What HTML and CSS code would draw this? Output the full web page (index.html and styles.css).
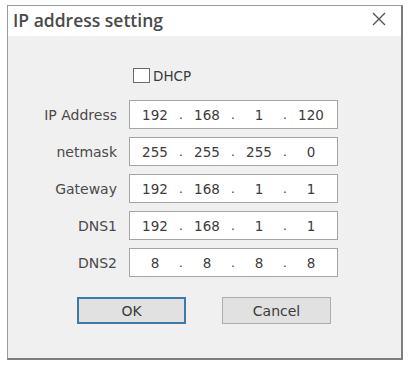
FILE: index.html
```html
<!DOCTYPE html>
<html>
<head>
<meta charset="utf-8">
<link rel="stylesheet" href="styles.css">
</head>
<body>
<div class="window">
  <div class="titlebar">
    <span class="title">IP address setting</span>
    <svg class="close" width="14" height="14" viewBox="0 0 14 14"><path d="M1 1 L13 13 M13 1 L1 13" stroke="#555" stroke-width="1.4" fill="none"/></svg>
  </div>
  <div class="content">
    <label class="dhcp"><span class="checkbox"></span><span class="dhcp-text">DHCP</span></label>
    <div class="fields">
      <div class="label">IP Address</div>
      <div class="ipbox"><span>192</span><span class="dot">.</span><span>168</span><span class="dot">.</span><span>1</span><span class="dot">.</span><span>120</span></div>
      <div class="label">netmask</div>
      <div class="ipbox"><span>255</span><span class="dot">.</span><span>255</span><span class="dot">.</span><span>255</span><span class="dot">.</span><span>0</span></div>
      <div class="label">Gateway</div>
      <div class="ipbox"><span>192</span><span class="dot">.</span><span>168</span><span class="dot">.</span><span>1</span><span class="dot">.</span><span>1</span></div>
      <div class="label">DNS1</div>
      <div class="ipbox"><span>192</span><span class="dot">.</span><span>168</span><span class="dot">.</span><span>1</span><span class="dot">.</span><span>1</span></div>
      <div class="label">DNS2</div>
      <div class="ipbox"><span>8</span><span class="dot">.</span><span>8</span><span class="dot">.</span><span>8</span><span class="dot">.</span><span>8</span></div>
    </div>
    <div class="buttons">
      <button class="btn ok">OK</button>
      <button class="btn cancel">Cancel</button>
    </div>
  </div>
</div>
</body>
</html>
```
FILE: styles.css
```css
html, body {
  margin: 0;
  padding: 0;
  background: #ffffff;
}
body {
  padding: 5px 0 0 7px;
  font-family: "DejaVu Sans", sans-serif;
}
.window {
  width: 393px;
  height: 352px;
  border: 1px solid #9a9a9a;
  border-right: 2px solid #7d7d7d;
  border-bottom: 2px solid #7d7d7d;
  background: #f0f0f0;
  display: flex;
  flex-direction: column;
}
.titlebar {
  height: 30px;
  background: #ffffff;
  display: flex;
  align-items: center;
  justify-content: space-between;
  padding: 0 15px 0 5px;
}
.title {
  font-family: "Open Sans", sans-serif;
  font-size: 17.5px;
  color: #4a4a4a;
  font-weight: 600;
  position: relative;
  top: -1px;
}
.close {
  display: block;
  margin-top: -4px;
}
.content {
  flex: 1;
  display: flex;
  flex-direction: column;
  padding-top: 32px;
}
.dhcp {
  display: flex;
  align-items: center;
  margin-left: 125px;
  height: 15px;
}
.checkbox {
  width: 15px;
  height: 13px;
  border: 1px solid #6a6a6a;
  background: #fff;
  margin-right: 3px;
}
.dhcp-text {
  font-size: 13.5px;
  color: #3a3a3a;
}
.fields {
  display: grid;
  grid-template-columns: 109px 209px;
  column-gap: 12px;
  row-gap: 8px;
  margin-top: 17px;
  align-items: center;
}
.label {
  text-align: right;
  font-size: 14px;
  color: #4a4a4a;
}
.ipbox {
  height: 27px;
  border: 1px solid #a5a5a5;
  background: #fff;
  display: grid;
  grid-template-columns: 44px 8px 44px 8px 44px 8px 44px;
  padding-left: 3px;
  align-items: center;
  font-size: 13.5px;
  color: #3c3c3c;
}
.ipbox span {
  text-align: center;
}
.ipbox .dot {
  font-size: 12px;
}
.buttons {
  display: flex;
  gap: 36px;
  margin-top: 20px;
  margin-left: 69px;
}
.btn {
  width: 109px;
  height: 27px;
  font-family: "DejaVu Sans", sans-serif;
  font-size: 14px;
  color: #3a3a3a;
  background: #e1e1e1;
  border: 1px solid #adadad;
  padding: 0;
  margin: 0;
}
.btn.ok {
  border: 2px solid #3d7aa8;
}
```
